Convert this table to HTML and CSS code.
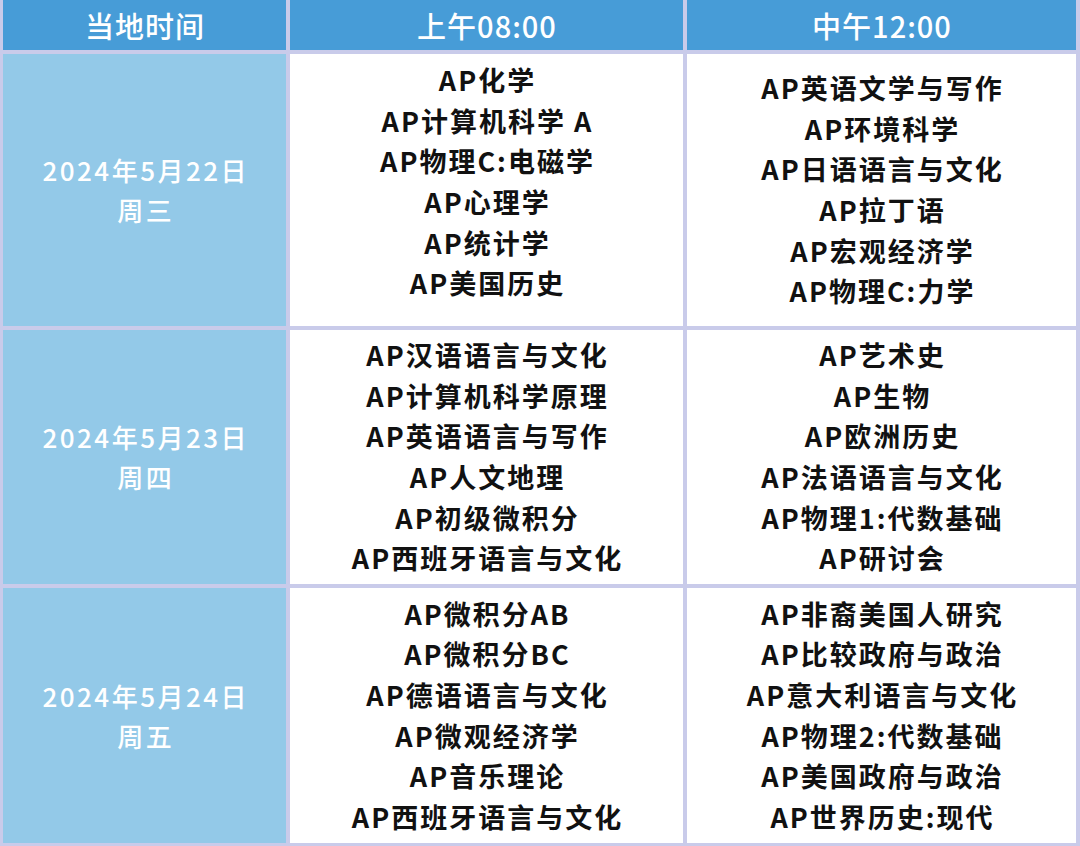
FILE: index.html
```html
<!DOCTYPE html>
<html lang="zh-CN">
<head>
<meta charset="utf-8">
<title>AP考试时间表</title>
<link rel="stylesheet" href="styles.css">
</head>
<body>
<div class="table">
  <div class="head">当地时间</div>
  <div class="head">上午08:00</div>
  <div class="head">中午12:00</div>

  <div class="date">2024年5月22日<br>周三</div>
  <div class="cell cell-up">AP化学<br>AP计算机科学 A<br>AP物理C:电磁学<br>AP心理学<br>AP统计学<br>AP美国历史</div>
  <div class="cell">AP英语文学与写作<br>AP环境科学<br>AP日语语言与文化<br>AP拉丁语<br>AP宏观经济学<br>AP物理C:力学</div>

  <div class="date">2024年5月23日<br>周四</div>
  <div class="cell">AP汉语语言与文化<br>AP计算机科学原理<br>AP英语语言与写作<br>AP人文地理<br>AP初级微积分<br>AP西班牙语言与文化</div>
  <div class="cell">AP艺术史<br>AP生物<br>AP欧洲历史<br>AP法语语言与文化<br>AP物理1:代数基础<br>AP研讨会</div>

  <div class="date">2024年5月24日<br>周五</div>
  <div class="cell">AP微积分AB<br>AP微积分BC<br>AP德语语言与文化<br>AP微观经济学<br>AP音乐理论<br>AP西班牙语言与文化</div>
  <div class="cell">AP非裔美国人研究<br>AP比较政府与政治<br>AP意大利语言与文化<br>AP物理2:代数基础<br>AP美国政府与政治<br>AP世界历史:现代</div>
</div>
</body>
</html>
```

FILE: styles.css
```css
html, body {
  margin: 0;
  padding: 0;
  background: #ffffff;
}

.table {
  width: 1080px;
  height: 846px;
  box-sizing: border-box;
  display: grid;
  grid-template-columns: 283px 393px 389px;
  grid-template-rows: 50px 272px 254px 255px;
  column-gap: 4px;
  row-gap: 4px;
  padding: 0 4px 3px 3px;
  background: #c9cbea;
  font-family: "Noto Sans CJK SC", "Noto Sans", sans-serif;
}

.head {
  background: #479cd7;
  color: #ffffff;
  font-size: 29px;
  font-weight: 500;
  letter-spacing: 1px;
  padding-left: 1px;
  display: flex;
  align-items: center;
  justify-content: center;
  line-height: 1;
}

.date {
  background: #93c9e8;
  color: #ffffff;
  font-size: 26px;
  font-weight: 500;
  line-height: 40px;
  letter-spacing: 2.5px;
  padding-left: 2.5px;
  display: flex;
  align-items: center;
  justify-content: center;
  text-align: center;
}

.cell {
  background: #ffffff;
  color: #111111;
  font-size: 27px;
  font-weight: 700;
  line-height: 40.6px;
  letter-spacing: 2px;
  padding-left: 2px;
  display: flex;
  align-items: center;
  justify-content: center;
  text-align: center;
}

.cell-up {
  padding-bottom: 16px;
}
```
